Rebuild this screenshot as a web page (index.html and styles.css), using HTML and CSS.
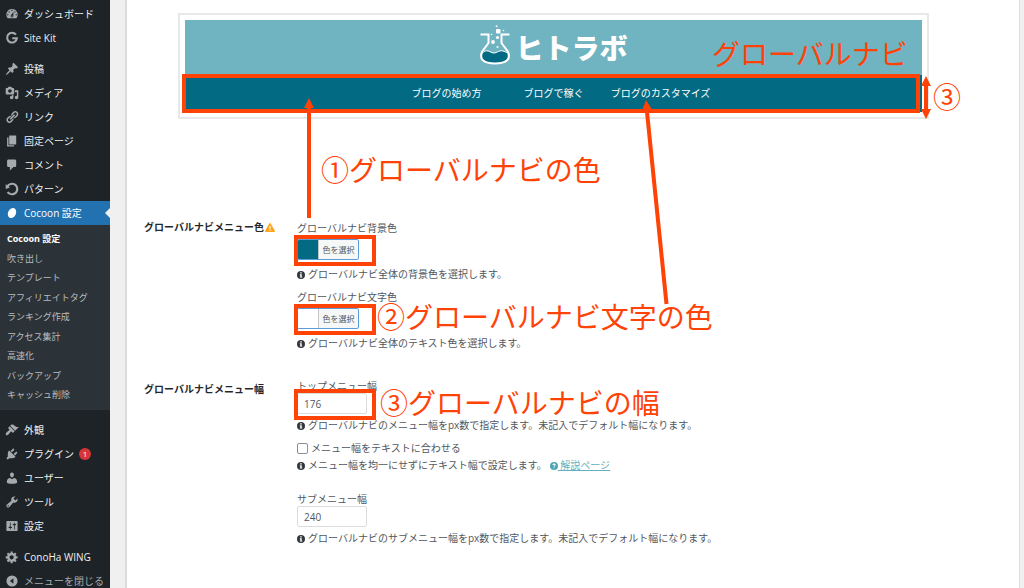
FILE: index.html
```html
<!DOCTYPE html>
<html lang="ja">
<head>
<meta charset="utf-8">
<meta name="viewport" content="width=device-width, initial-scale=1">
<title>Cocoon 設定</title>
<link rel="stylesheet" href="styles.css">
</head>
<body>
<div class="layout">
  <nav class="sidebar" aria-label="管理メニュー">
    <ul class="menu">
      <li><a class="item" href="#"><svg class="icon" viewBox="0 0 20 20"><path d="M3.76 16h12.48A7.998 7.998 0 0 0 10 3a7.998 7.998 0 0 0-6.24 13zM10 4c.55 0 1 .45 1 1s-.45 1-1 1-1-.45-1-1 .45-1 1-1zM6 6c.55 0 1 .45 1 1s-.45 1-1 1-1-.45-1-1 .45-1 1-1zm8 0c.55 0 1 .45 1 1s-.45 1-1 1-1-.45-1-1 .45-1 1-1zm-5.37 5.55L12 7v6c0 1.1-.9 2-2 2s-2-.9-2-2c0-.57.24-1.08.63-1.45zM4 10c.55 0 1 .45 1 1s-.45 1-1 1-1-.45-1-1 .45-1 1-1zm12 0c.55 0 1 .45 1 1s-.45 1-1 1-1-.45-1-1 .45-1 1-1zm-5 3c0-.55-.45-1-1-1s-1 .45-1 1 .45 1 1 1 1-.45 1-1z"/></svg>ダッシュボード</a></li>
      <li><a class="item" href="#"><svg class="icon" viewBox="0 0 20 20"><path class="stroke" d="M15.6 5.2A7 7 0 1 0 17 10.3H10.4"/></svg>Site Kit</a></li>
    </ul>
    <ul class="menu">
      <li><a class="item" href="#"><svg class="icon" viewBox="0 0 20 20"><path d="M10.44 3.02l1.82-1.82 6.36 6.35-1.83 1.82c-1.05-.68-2.48-.57-3.41.36l-.75.75c-.92.93-1.04 2.35-.35 3.41l-1.83 1.82-2.41-2.41-2.8 2.79c-.42.42-3.38 2.71-3.8 2.29s1.86-3.39 2.28-3.81l2.79-2.79L4.1 9.36l1.83-1.82c1.05.69 2.48.57 3.4-.36l.75-.75c.93-.92 1.05-2.35.36-3.41z"/></svg>投稿</a></li>
      <li><a class="item" href="#"><svg class="icon" viewBox="0 0 20 20"><path d="M13 11V4c0-.55-.45-1-1-1h-1.67L9 1H5L3.67 3H2c-.55 0-1 .45-1 1v7c0 .55.45 1 1 1h10c.55 0 1-.45 1-1zM7 4.5c1.38 0 2.5 1.12 2.5 2.5S8.38 9.5 7 9.5 4.5 8.38 4.5 7 5.62 4.5 7 4.5zM14 6h5v10.5c0 1.38-1.12 2.5-2.5 2.5S14 17.88 14 16.5s1.12-2.5 2.5-2.5c.17 0 .34.02.5.05V9h-3V6zm-4 8.05V13h2v3.5c0 1.38-1.12 2.5-2.5 2.5S7 17.88 7 16.5 8.12 14 9.5 14c.17 0 .34.02.5.05z"/></svg>メディア</a></li>
      <li><a class="item" href="#"><svg class="icon" viewBox="0 0 20 20"><path d="M17.74 2.76c1.68 1.69 1.68 4.41 0 6.1l-1.53 1.52c-1.12 1.12-2.7 1.47-4.14 1.09l2.62-2.61.76-.77.76-.76c.84-.84.84-2.2 0-3.04-.84-.85-2.2-.85-3.04 0l-.77.76-3.38 3.38c-.37-1.44-.02-3.02 1.1-4.14l1.52-1.53c1.69-1.68 4.42-1.68 6.1 0zM8.59 13.43l5.34-5.34c.42-.42.42-1.1 0-1.52-.44-.43-1.13-.39-1.53 0l-5.33 5.34c-.42.42-.42 1.1 0 1.52.44.43 1.13.39 1.52 0zm-.76 2.29l4.14-4.15c.38 1.44.03 3.02-1.09 4.14l-1.52 1.53c-1.69 1.68-4.41 1.68-6.1 0-1.68-1.68-1.68-4.42 0-6.1l1.53-1.52c1.12-1.12 2.7-1.47 4.14-1.1l-4.14 4.15c-.85.84-.85 2.2 0 3.05.84.84 2.2.84 3.04 0z"/></svg>リンク</a></li>
      <li><a class="item" href="#"><svg class="icon" viewBox="0 0 20 20"><path d="M6 15V2h10v13H6zm-1 1h8v2H3V5h2v11z"/></svg>固定ページ</a></li>
      <li><a class="item" href="#"><svg class="icon" viewBox="0 0 20 20"><path d="M5 2h9c1.1 0 2 .9 2 2v7c0 1.1-.9 2-2 2h-2l-5 5v-5H5c-1.1 0-2-.9-2-2V4c0-1.1.9-2 2-2z"/></svg>コメント</a></li>
      <li><a class="item" href="#"><svg class="icon" viewBox="0 0 20 20"><path d="M10.25 1.02c5.1 0 8.75 4.04 8.75 9s-3.65 9-8.75 9c-3.2 0-6.02-1.59-7.68-3.99l2.59-1.52c1.1 1.5 2.86 2.51 4.84 2.51 3.3 0 6-2.79 6-6s-2.7-6-6-6c-1.97 0-3.72 1-4.82 2.49L7 8.02l-6 2v-7L2.89 4.6c1.69-2.17 4.36-3.58 7.36-3.58z"/></svg>パターン</a></li>
      <li>
        <a class="item current" href="#"><svg class="icon" viewBox="0 0 20 20"><ellipse cx="10" cy="10" rx="5.6" ry="7.6" transform="rotate(25 10 10)"/></svg>Cocoon 設定</a>
        <ul class="submenu">
          <li><a class="sub active" href="#">Cocoon 設定</a></li>
          <li><a class="sub" href="#">吹き出し</a></li>
          <li><a class="sub" href="#">テンプレート</a></li>
          <li><a class="sub" href="#">アフィリエイトタグ</a></li>
          <li><a class="sub" href="#">ランキング作成</a></li>
          <li><a class="sub" href="#">アクセス集計</a></li>
          <li><a class="sub" href="#">高速化</a></li>
          <li><a class="sub" href="#">バックアップ</a></li>
          <li><a class="sub" href="#">キャッシュ削除</a></li>
        </ul>
      </li>
    </ul>
    <ul class="menu">
      <li><a class="item" href="#"><svg class="icon" viewBox="0 0 20 20"><path d="M14.48 11.06L7.41 3.99l1.5-1.5c.5-.56 2.3-.47 3.51.32 1.21.8 1.43 1.28 2.91 2.1 1.18.64 2.45 1.26 4.45.85zm-.71.71L6.7 4.7 4.93 6.47c-.39.39-.39 1.02 0 1.41l1.06 1.06c.39.39.39 1.03 0 1.42-.6.6-1.43 1.11-2.21 1.69-.35.26-.7.53-1.01.84C1.43 14.23.4 16.08 1.4 17.07c.99 1 2.84-.03 4.18-1.36.31-.31.58-.66.85-1.02.57-.78 1.08-1.61 1.69-2.21.39-.39 1.02-.39 1.41 0l1.06 1.06c.39.39 1.02.39 1.41 0z"/></svg>外観</a></li>
      <li><a class="item" href="#"><svg class="icon" viewBox="0 0 20 20"><path d="M13.11 4.36L9.87 7.6 8 5.73l3.24-3.24c.35-.34 1.05-.2 1.56.32.52.51.66 1.21.31 1.55zm-8 1.77l.91-1.12 9.01 9.01-1.19.84c-.71.71-2.63 1.16-3.82 1.16H6.14L4.9 17.26c-.59.59-1.54.59-2.12 0-.59-.58-.59-1.53 0-2.12l1.24-1.24v-3.88c0-1.13.4-3.19 1.09-3.89zm7.26 3.97l3.24-3.24c.34-.35 1.04-.21 1.55.31.52.51.66 1.21.31 1.55l-3.24 3.25z"/></svg>プラグイン<span class="badge">1</span></a></li>
      <li><a class="item" href="#"><svg class="icon" viewBox="0 0 20 20"><path d="M10 9.25c-2.27 0-2.73-3.44-2.73-3.44C7 4.02 7.82 2 9.97 2c2.16 0 2.98 2.02 2.71 3.81 0 0-.41 3.44-2.68 3.44zm0 2.57L12.72 10c2.39 0 4.52 2.33 4.52 4.53v2.49s-3.65 1.13-7.24 1.13c-3.65 0-7.24-1.13-7.24-1.13v-2.49c0-2.25 1.94-4.48 4.47-4.48z"/></svg>ユーザー</a></li>
      <li><a class="item" href="#"><svg class="icon" viewBox="0 0 20 20"><path d="M16.68 9.77c-1.34 1.34-3.3 1.67-4.95.99l-5.41 6.52c-.99.99-2.59.99-3.58 0s-.99-2.59 0-3.57l6.52-5.42c-.68-1.65-.35-3.61.99-4.95 1.28-1.28 3.12-1.62 4.72-1.06l-2.89 2.89 2.82 2.82 2.86-2.87c.53 1.58.18 3.39-1.08 4.65zM3.81 16.21c.4.39 1.04.39 1.43 0 .4-.4.4-1.04 0-1.43-.39-.4-1.03-.4-1.43 0-.39.39-.39 1.03 0 1.43z"/></svg>ツール</a></li>
      <li><a class="item" href="#"><svg class="icon" viewBox="0 0 20 20"><path d="M18 16V4c0-.55-.45-1-1-1H3c-.55 0-1 .45-1 1v12c0 .55.45 1 1 1h14c.55 0 1-.45 1-1zM8 11h1c.55 0 1 .45 1 1s-.45 1-1 1H8v1.5c0 .28-.22.5-.5.5s-.5-.22-.5-.5V13H6c-.55 0-1-.45-1-1s.45-1 1-1h1V5.5c0-.28.22-.5.5-.5s.5.22.5.5V11zm5-2h-1c-.55 0-1-.45-1-1s.45-1 1-1h1V5.5c0-.28.22-.5.5-.5s.5.22.5.5V7h1c.55 0 1 .45 1 1s-.45 1-1 1h-1v5.5c0 .28-.22.5-.5.5s-.5-.22-.5-.5V9z"/></svg>設定</a></li>
    </ul>
    <ul class="menu">
      <li><a class="item" href="#"><svg class="icon" viewBox="0 0 20 20"><path d="M18 12h-2.18c-.17.7-.44 1.35-.81 1.93l1.54 1.54-2.1 2.1-1.54-1.54c-.58.36-1.23.63-1.91.79V19H8v-2.18c-.68-.16-1.33-.43-1.91-.79l-1.54 1.54-2.12-2.12 1.54-1.54c-.36-.58-.63-1.23-.79-1.91H1V9.03h2.17c.16-.7.44-1.35.8-1.94L2.43 5.55l2.1-2.1 1.54 1.54c.58-.37 1.24-.64 1.93-.81V2h3v2.18c.68.16 1.33.43 1.91.79l1.54-1.54 2.12 2.12-1.54 1.54c.36.59.64 1.24.8 1.94H18V12zm-8.5 1.5c1.66 0 3-1.34 3-3s-1.34-3-3-3-3 1.34-3 3 1.34 3 3 3z"/></svg>ConoHa WING</a></li>
      <li><button class="item collapse" type="button"><svg class="icon" viewBox="0 0 20 20"><path fill-rule="evenodd" d="M10 2a8 8 0 1 1 0 16 8 8 0 0 1 0-16zm2 4-5 4 5 4z"/></svg>メニューを閉じる</button></li>
    </ul>
  </nav>

  <main class="panel">
    <div class="preview">
      <header class="site-head">
        <svg class="flask" viewBox="0 0 32 40">
          <path class="liquid" d="M3.6 28.5c3-3.6 6.4-2 9.4-.6 4 1.800 6.500-2.900 11-1.600 2.300.6 3.600 1.500 4.600 2.500 1.300 6-2.700 9.200-12.600 9.200S2 34.800 3.600 28.500z"/>
          <path class="glass" d="M1.500 9.500H9.500V18L3.200 26.500C-.2 34 4 38.500 16 38.500s16.200-4.500 12.800-12L22.500 18V9.500H30.500"/>
          <path class="glass thin" d="M4.500 27c3-2.500 5.500-.7 8.500.6 4 1.800 6.500-2.900 11-1.600 1.500.3 2.500.8 3.700 1.600"/>
          <rect class="bubble" x="17" y="4" width="4.500" height="4.500" rx="1"/><circle class="bubble" cx="17.600" cy="1.300" r="1"/><circle class="bubble" cx="24.500" cy="5.500" r=".8"/><circle class="bubble" cx="18.500" cy="12.500" r="1.600"/><circle class="bubble" cx="14" cy="17" r="1.900"/><circle class="bubble" cx="12.500" cy="9.500" r=".8"/><circle class="bubble" cx="18.500" cy="22" r="1"/>
        </svg>
        <span class="brand">ヒトラボ</span>
      </header>
      <nav class="site-nav" aria-label="グローバルナビ">
        <a href="#">ブログの始め方</a>
        <a href="#">ブログで稼ぐ</a>
        <a href="#">ブログのカスタマイズ</a>
      </nav>
    </div>

    <form class="settings">
      <section class="row">
        <h2 class="heading">グローバルナビメニュー色<svg class="warn" viewBox="0 0 20 18"><path fill-rule="evenodd" d="M8.600 1.100q1.400-2 2.800 0l8.300 14.600q.8 2-1.400 2.300H1.700q-2.200-.3-1.400-2.300zM8.800 6v5.500h2.400V6zm0 7v2.300h2.400V13z"/></svg></h2>
        <div class="fields">
          <div class="group">
            <label for="bg">グローバルナビ背景色</label>
            <div class="picker-line"><button class="picker" id="bg" type="button"><span class="swatch teal"></span><span class="pick-text">色を選択</span></button><span class="frame"></span></div>
            <p class="tip"><svg class="info" viewBox="0 0 16 16"><path fill-rule="evenodd" d="M8 0a8 8 0 1 1 0 16A8 8 0 0 1 8 0zM6.500 2.500V5h3V2.500zM5.500 6.500V8h1v3.500h-1V13h5v-1.500h-1v-5z"/></svg>グローバルナビ全体の背景色を選択します。</p>
          </div>
          <div class="group">
            <label for="fg">グローバルナビ文字色</label>
            <div class="picker-line"><button class="picker" id="fg" type="button"><span class="swatch"></span><span class="pick-text">色を選択</span></button><span class="frame"></span></div>
            <p class="tip"><svg class="info" viewBox="0 0 16 16"><path fill-rule="evenodd" d="M8 0a8 8 0 1 1 0 16A8 8 0 0 1 8 0zM6.500 2.500V5h3V2.500zM5.500 6.500V8h1v3.500h-1V13h5v-1.500h-1v-5z"/></svg>グローバルナビ全体のテキスト色を選択します。</p>
          </div>
        </div>
      </section>
      <section class="row">
        <h2 class="heading spaced">グローバルナビメニュー幅</h2>
        <div class="fields">
          <div class="group">
            <label for="top">トップメニュー幅</label>
            <div class="input-line"><input class="number" id="top" type="text" value="176"><span class="frame"></span></div>
            <p class="tip"><svg class="info" viewBox="0 0 16 16"><path fill-rule="evenodd" d="M8 0a8 8 0 1 1 0 16A8 8 0 0 1 8 0zM6.500 2.500V5h3V2.500zM5.500 6.500V8h1v3.500h-1V13h5v-1.500h-1v-5z"/></svg>グローバルナビのメニュー幅をpx数で指定します。未記入でデフォルト幅になります。</p>
          </div>
          <div class="group">
            <label class="check"><input type="checkbox">メニュー幅をテキストに合わせる</label>
            <p class="tip"><svg class="info" viewBox="0 0 16 16"><path fill-rule="evenodd" d="M8 0a8 8 0 1 1 0 16A8 8 0 0 1 8 0zM6.500 2.500V5h3V2.500zM5.500 6.500V8h1v3.500h-1V13h5v-1.500h-1v-5z"/></svg>メニュー幅を均一にせずにテキスト幅で設定します。<a class="help" href="#"><svg class="info" viewBox="0 0 16 16"><path fill-rule="evenodd" d="M8 0a8 8 0 1 1 0 16A8 8 0 0 1 8 0zM4.800 6h2.200c0-1.600 2-1.400 2-.2C9 7 7 7 7 9.500h2C9 8 11.200 7.800 11.200 5.700c0-3.700-6.400-3.800-6.400.3zM7 10.800V13h2v-2.200z"/></svg>&nbsp;解説ページ</a></p>
          </div>
          <div class="group last">
            <label for="subw">サブメニュー幅</label>
            <div class="input-line"><input class="number" id="subw" type="text" value="240"></div>
            <p class="tip"><svg class="info" viewBox="0 0 16 16"><path fill-rule="evenodd" d="M8 0a8 8 0 1 1 0 16A8 8 0 0 1 8 0zM6.500 2.500V5h3V2.500zM5.500 6.500V8h1v3.500h-1V13h5v-1.500h-1v-5z"/></svg>グローバルナビのサブメニュー幅をpx数で指定します。未記入でデフォルト幅になります。</p>
          </div>
        </div>
      </section>
    </form>

    <svg class="arrows">
      <path class="line" d="M182 218V106M539.500 304L519.500 107M799 84V112"/>
      <path class="head" d="M182 98l5 10h-10zM519 100l6 9.500-10 1zM799 76l5 10h-10zM799 119l5-10h-10z"/>
    </svg>
    <span class="note note-nav">グローバルナビ</span>
    <span class="note note-height">③</span>
    <span class="note note-one">①グローバルナビの色</span>
    <span class="note note-two">②グローバルナビ文字の色</span>
    <span class="note note-three">③グローバルナビの幅</span>
  </main>
</div>
</body>
</html>
```
FILE: styles.css
```css
* { box-sizing: border-box; }

body {
  margin: 0;
  background: #f0f0f1;
  color: #50575e;
  font: 10px/14px "Open Sans", "Noto Sans CJK JP", sans-serif;
}

ul, p, h2 { margin: 0; padding: 0; list-style: none; }
a { text-decoration: none; color: inherit; }
button, input { font: inherit; color: inherit; margin: 0; }

.layout { display: flex; height: 100vh; overflow: hidden; }

/* Sidebar */
.sidebar {
  flex: 0 0 110px;
  display: flex;
  flex-direction: column;
  gap: 7px;
  padding-top: 2px;
  background: #1d2327;
  color: #f0f0f1;
}
.item {
  position: relative;
  display: flex;
  align-items: center;
  gap: 5px;
  width: 100%;
  height: 24px;
  padding: 0 0 0 5px;
  border: 0;
  background: none;
  white-space: nowrap;
}
.icon { flex: none; width: 14px; height: 14px; fill: #a7aaad; }
.icon .stroke { fill: none; stroke: #a7aaad; stroke-width: 3; }
.collapse { color: #a7aaad; }
.current { background: #2271b1; color: #fff; }
.current .icon { fill: #fff; }
.current::after {
  content: "";
  position: absolute;
  right: 0;
  top: 7px;
  border: 5px solid transparent;
  border-left: 0;
  border-right-color: #f0f0f1;
}
.submenu {
  display: grid;
  height: 185px;
  margin-bottom: 1px;
  padding: 4px 0 5px;
  background: #2c3338;
}
.sub {
  display: block;
  padding-left: 7px;
  color: #b9bcbf;
  font-size: 9px;
  line-height: 19px;
  white-space: nowrap;
}
.active { color: #fff; font-weight: 700; }
.badge {
  width: 12px;
  height: 12px;
  border-radius: 6px;
  background: #d63638;
  color: #fff;
  font-size: 8px;
  line-height: 12px;
  text-align: center;
}

/* Settings panel */
.panel {
  position: relative;
  flex: 1;
  min-width: 0;
  margin: 0 4px 0 15px;
  padding: 13px 90px 43px 17px;
  border: solid #dcdcde;
  border-width: 0 1px 1px 2px;
  background: #fff;
  align-self: flex-start;
}
.preview {
  margin-left: 34px;
  padding: 5px;
  border: 2px solid #e6e8ea;
}
.site-head {
  display: flex;
  align-items: center;
  justify-content: center;
  gap: 4px;
  height: 55px;
  background: #70b3c1;
}
.flask { width: 32px; height: 40px; align-self: flex-start; margin-top: 5px; }
.glass { fill: none; stroke: #fff; stroke-width: 2; }
.thin { stroke-width: 1; }
.liquid { fill: #026a82; }
.bubble { fill: #fff; }
.brand { color: #fff; font-size: 28px; line-height: 40px; font-weight: 900; }
.site-nav {
  position: relative;
  display: flex;
  justify-content: center;
  height: 37px;
  background: #026a82;
  color: #fff;
  line-height: 37px;
}
.site-nav a { width: 107px; text-align: center; }
.site-nav::after {
  content: "";
  position: absolute;
  inset: -1px 2px -1px -3px;
  border: 4px solid #ff4206;
}

.settings {
  display: flex;
  flex-direction: column;
  gap: 29px;
  padding-top: 102px;
}
.row { display: grid; grid-template-columns: 153px 1fr; }
.heading { color: #23282d; font-size: 10px; line-height: 12px; font-weight: 700; white-space: nowrap; }
.spaced { padding-top: 4px; }
.warn { width: 10px; height: 9px; margin-left: 1px; fill: #ffa41c; vertical-align: -1px; }
.fields { display: flex; flex-direction: column; gap: 9px; }
.group > label { display: block; }
.picker-line, .input-line { position: relative; width: 70px; height: 21px; }
.picker-line { margin: 4px 0 7px; }
.input-line { margin-bottom: 4px; }
.frame {
  position: absolute;
  inset: -4px -9px -6px -3px;
  border: 4px solid #ff4206;
}
.picker {
  display: flex;
  width: 62px;
  height: 21px;
  padding: 0;
  border: 1px solid #5b9dd9;
  border-radius: 2px;
  overflow: hidden;
  background: #f6f7f7;
}
.swatch { width: 21px; height: 19px; background: #fff; border-right: 1px solid #c3c4c7; }
.teal { background: #026a82; }
.pick-text { flex: 1; font-size: 8px; line-height: 19px; text-align: center; white-space: nowrap; }
.number {
  display: block;
  width: 70px;
  height: 21px;
  padding: 0 6px;
  border: 1px solid #dcdcde;
  border-radius: 2px;
  background: #fff;
}
.tip { white-space: nowrap; }
.info { width: 8px; height: 8px; margin-right: 3px; fill: #32373c; vertical-align: -1px; }
.group > .check { display: flex; align-items: center; gap: 3px; margin-bottom: 3px; }
.check input {
  appearance: none;
  width: 11px;
  height: 11px;
  border: 1px solid #8c8f94;
  border-radius: 2px;
}
.help { margin-left: 3px; color: #65b0bd; text-decoration: underline; }
.help .info { margin: 0; fill: #4da4b3; }
.last { margin-top: 11px; }

/* Explanatory notes drawn over the panel */
.arrows { position: absolute; inset: 0; width: 100%; height: 100%; pointer-events: none; }
.line { fill: none; stroke: #ff4206; stroke-width: 4; }
.head { fill: #ff4206; }
.note {
  position: absolute;
  color: #ff4206;
  font-size: 28px;
  line-height: 28px;
  white-space: nowrap;
}
.note-nav { left: 585px; top: 40px; }
.note-height { left: 806px; top: 83px; }
.note-one { left: 194px; top: 156px; }
.note-two { left: 250px; top: 303px; }
.note-three { left: 253px; top: 389px; }
```
